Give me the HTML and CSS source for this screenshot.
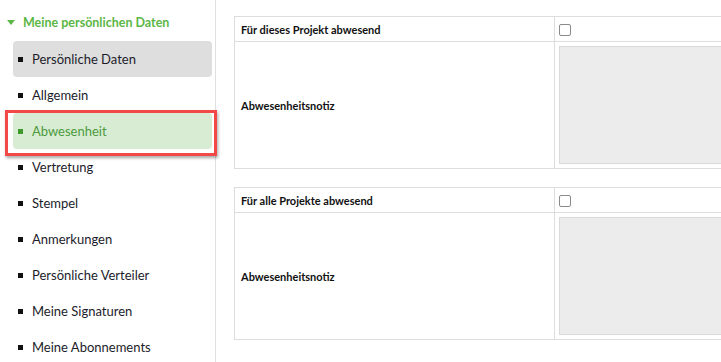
FILE: index.html
```html
<!DOCTYPE html>
<html lang="de">
<head>
<meta charset="utf-8">
<title>Abwesenheit</title>
<link rel="stylesheet" href="styles.css">
</head>
<body>
<div class="page">
  <aside class="sidebar">
    <div class="section-title"><span class="caret"></span>Meine persönlichen Daten</div>
    <ul class="nav">
      <li class="nav-item is-hover"><span class="bullet"></span>Persönliche Daten</li>
      <li class="nav-item"><span class="bullet"></span>Allgemein</li>
      <li class="nav-item is-active"><span class="bullet"></span>Abwesenheit<span class="highlight"></span></li>
      <li class="nav-item"><span class="bullet"></span>Vertretung</li>
      <li class="nav-item"><span class="bullet"></span>Stempel</li>
      <li class="nav-item"><span class="bullet"></span>Anmerkungen</li>
      <li class="nav-item"><span class="bullet"></span>Persönliche Verteiler</li>
      <li class="nav-item"><span class="bullet"></span>Meine Signaturen</li>
      <li class="nav-item"><span class="bullet"></span>Meine Abonnements</li>
    </ul>
  </aside>
  <main class="content">
    <table class="form-table">
      <colgroup><col class="col-label"><col class="col-field"></colgroup>
      <tr class="row-check">
        <th>Für dieses Projekt abwesend</th>
        <td><input type="checkbox" class="check"></td>
      </tr>
      <tr class="row-note">
        <th>Abwesenheitsnotiz</th>
        <td><textarea class="note" disabled></textarea></td>
      </tr>
    </table>
    <table class="form-table">
      <colgroup><col class="col-label"><col class="col-field"></colgroup>
      <tr class="row-check">
        <th>Für alle Projekte abwesend</th>
        <td><input type="checkbox" class="check"></td>
      </tr>
      <tr class="row-note">
        <th>Abwesenheitsnotiz</th>
        <td><textarea class="note" disabled></textarea></td>
      </tr>
    </table>
  </main>
</div>
</body>
</html>
```
FILE: styles.css
```css
html, body {
  margin: 0;
  padding: 0;
  background: #fff;
  overflow: hidden;
}
body {
  font-family: Lato, "Noto Sans", sans-serif;
  color: #1a1a1a;
  width: 721px;
  height: 362px;
}
.page {
  display: flex;
  height: 362px;
}
.sidebar {
  width: 215px;
  flex: 0 0 215px;
  border-right: 1px solid #e0e0e0;
}
.section-title {
  display: flex;
  align-items: center;
  height: 22px;
  margin-top: 11px;
  padding-left: 7px;
  font-weight: 700;
  font-size: 12.5px;
  color: #5cb646;
}
.caret {
  width: 0;
  height: 0;
  border-left: 4px solid transparent;
  border-right: 4px solid transparent;
  border-top: 5px solid #5cb646;
  margin-right: 8px;
}
.nav {
  list-style: none;
  margin: 8px 0 0 13px;
  padding: 0;
}
.nav-item {
  position: relative;
  display: flex;
  align-items: center;
  width: 199px;
  height: 36px;
  padding-left: 5px;
  box-sizing: border-box;
  border-radius: 4px;
  font-size: 13px;
  color: #1c1c2a;
}
.bullet {
  width: 5px;
  height: 5px;
  background: #111;
  margin-right: 9px;
}
.is-hover {
  background: #dedede;
}
.is-active {
  background: #d8ecd3;
  color: #4c9a3c;
}
.is-active .bullet {
  background: #3f9a2e;
}
.highlight {
  position: absolute;
  left: -8px;
  top: -3px;
  right: -5px;
  bottom: -7px;
  border: 3px solid #f24848;
  box-shadow: 1px 2px 3px rgba(0, 0, 0, 0.35);
  pointer-events: none;
}
.content {
  flex: 1;
  padding: 16px 0 0 18px;
  min-width: 0;
}
.form-table {
  border-collapse: collapse;
  table-layout: fixed;
  width: 640px;
  margin-bottom: 18px;
}
.col-label {
  width: 320px;
}
.col-field {
  width: 320px;
}
.form-table th,
.form-table td {
  border: 1px solid #dddddd;
  padding: 0;
}
.form-table th {
  text-align: left;
  padding-left: 6px;
  font-size: 11px;
  font-weight: 700;
  color: #111;
}
.row-check th,
.row-check td {
  height: 24px;
}
.row-note th,
.row-note td {
  height: 126px;
}
.form-table td {
  padding-left: 4px;
}
.check {
  appearance: none;
  -webkit-appearance: none;
  display: block;
  width: 12px;
  height: 12px;
  margin: 2px 0 0 0;
  border: 1px solid #8a8a8a;
  border-radius: 2px;
  background: #fff;
  box-sizing: border-box;
}
.note {
  display: block;
  width: 320px;
  height: 118px;
  margin: 0;
  border: 1px solid #dadada;
  background: #ececec;
  resize: none;
  box-sizing: border-box;
}
```
